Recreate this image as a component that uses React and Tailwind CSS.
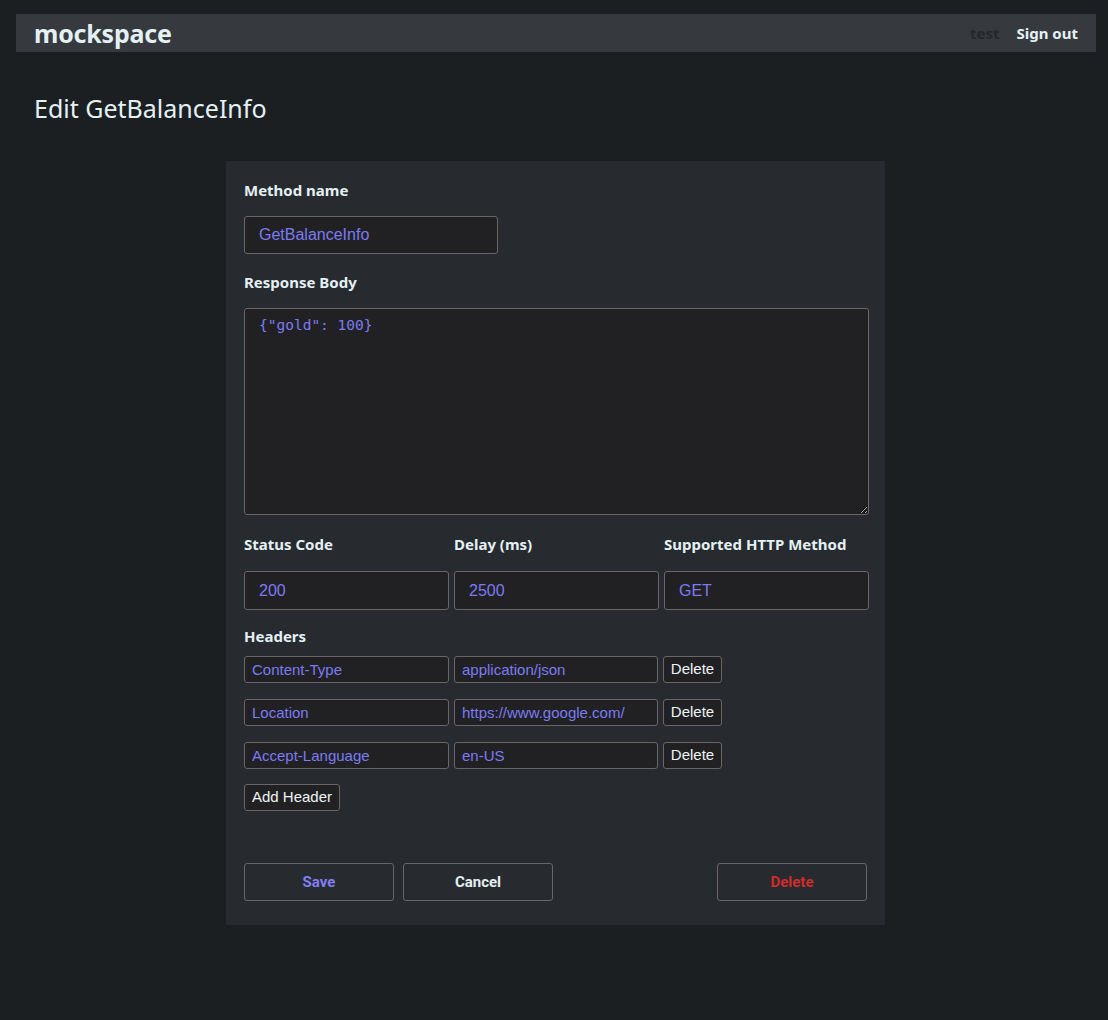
import { useState } from 'react'

const field =
  'rounded-[3px] border border-[#6b6468] bg-[#212124] text-[#7b7bf3] outline-none'

function Label({ children, className = '' }) {
  return (
    <div className={`font-['Noto_Sans',sans-serif] text-[15px] font-bold text-[#e3f1f5] leading-5 ${className}`}>
      {children}
    </div>
  )
}

export default function App() {
  const [headers, setHeaders] = useState([
    ['Content-Type', 'application/json'],
    ['Location', 'https://www.google.com/'],
    ['Accept-Language', 'en-US'],
  ])

  return (
    <div className="min-h-[1020px] bg-[#1b1f22] pl-4 pr-3 pt-[14px] font-['Noto_Sans',sans-serif] text-[#e3f1f5]">
      <nav className="flex h-[38px] items-center justify-between bg-[#36393e] pl-[18px] pr-[18px]">
        <span className="text-[25px] font-bold leading-none tracking-[-0.2px]">mockspace</span>
        <div className="flex items-center gap-[17px] text-[15px] font-bold">
          <span className="text-[#25282b]">test</span>
          <span>Sign out</span>
        </div>
      </nav>

      <h1 className="mt-[38px] pl-[18px] text-[25px] font-normal leading-9">Edit GetBalanceInfo</h1>

      <div className="ml-[210px] mt-[35px] w-[659px] bg-[#272a2e] pb-6 pl-[18px] pr-4 pt-[19px]">
        <Label>Method name</Label>
        <input
          className={`${field} mt-[16px] h-[38px] w-[254px] px-[14px] font-['Liberation_Sans',sans-serif] text-base`}
          defaultValue="GetBalanceInfo"
        />

        <Label className="mt-[18px]">Response Body</Label>
        <textarea
          className={`${field} mt-[16px] block h-[207px] w-full resize-y px-[14px] py-[6px] font-['DejaVu_Sans_Mono',monospace] text-[14.5px] leading-5`}
          defaultValue={'{"gold": 100}'}
        />

        <div className="mt-[19px] grid grid-cols-3 gap-[5px]">
          {[
            ['Status Code', '200'],
            ['Delay (ms)', '2500'],
            ['Supported HTTP Method', 'GET'],
          ].map(([label, value]) => (
            <div key={label}>
              <Label>{label}</Label>
              <input
                className={`${field} mt-[17px] h-[39px] w-full px-[14px] font-['Liberation_Sans',sans-serif] text-base`}
                defaultValue={value}
              />
            </div>
          ))}
        </div>

        <Label className="mt-[16px]">Headers</Label>
        <div className="mt-[10px] flex flex-col gap-4">
          {headers.map(([k, v], i) => (
            <div key={i} className="flex gap-[5px] font-['Liberation_Sans',sans-serif] text-[15px]">
              <input className={`${field} h-[27px] w-[205px] px-[7px]`} defaultValue={k} />
              <input className={`${field} h-[27px] w-[204px] px-[7px]`} defaultValue={v} />
              <button
                onClick={() => setHeaders(headers.filter((_, j) => j !== i))}
                className="h-[27px] w-[59px] rounded-[3px] border border-[#6b6468] bg-[#212124] text-[#eef4f6]"
              >
                Delete
              </button>
            </div>
          ))}
        </div>
        <button
          onClick={() => setHeaders([...headers, ['', '']])}
          className="mt-[15px] h-[27px] w-[96px] rounded-[3px] border border-[#6b6468] bg-[#212124] font-['Liberation_Sans',sans-serif] text-[15px] text-[#eef4f6]"
        >
          Add Header
        </button>

        <div className="mt-[52px] flex items-center font-['Roboto',sans-serif] text-[15px] font-bold">
          <button className="h-[38px] w-[150px] rounded-[3px] border border-[#6b6468] text-[#8080f5]">Save</button>
          <button className="ml-[9px] h-[38px] w-[150px] rounded-[3px] border border-[#6b6468] text-[#e3f1f5]">Cancel</button>
          <button className="ml-auto mr-[2px] h-[38px] w-[150px] rounded-[3px] border border-[#6b6468] text-[#d02c2c]">Delete</button>
        </div>
      </div>
    </div>
  )
}
